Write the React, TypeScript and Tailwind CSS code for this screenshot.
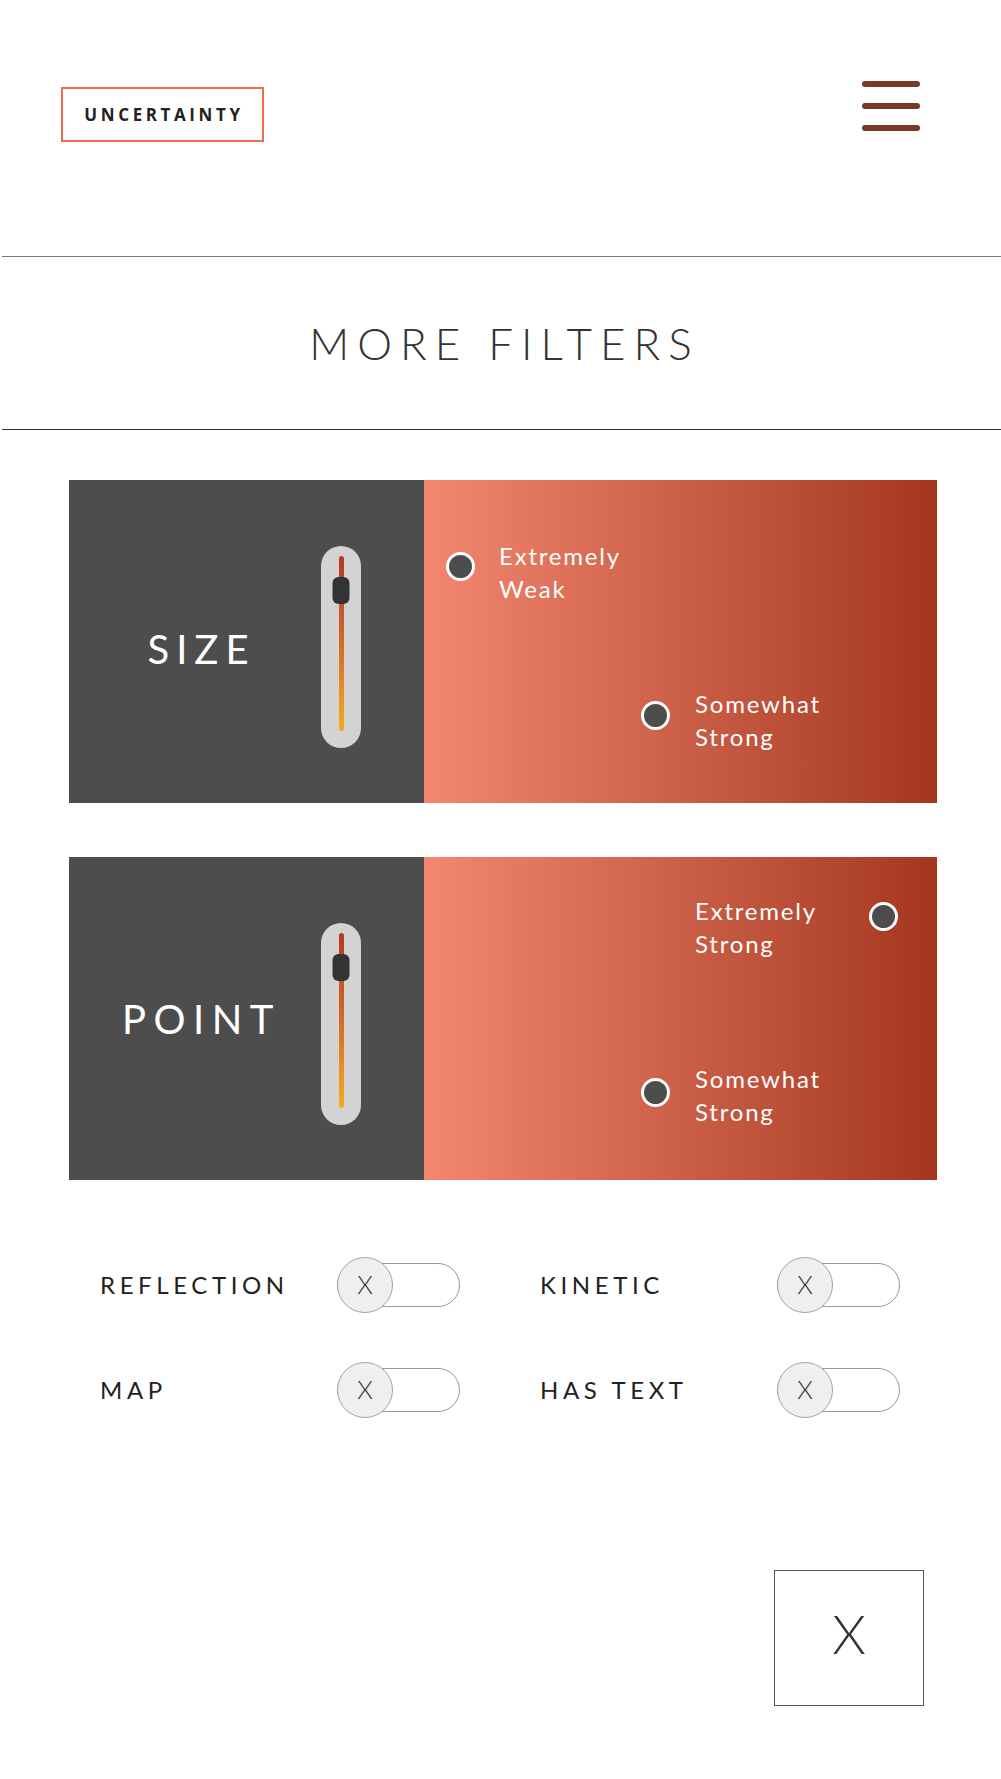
import React from "react";

const Slider: React.FC = () => (
  <div className="flex h-[202px] w-[40px] flex-col items-center rounded-full bg-[#d3d3d3] pt-[10px]">
    <div className="relative h-[175px] w-[5px] rounded-full bg-linear-to-b from-[#b03a26] via-[#d26a28] to-[#f8ab1b]">
      <div className="absolute left-1/2 top-[21px] h-[27px] w-[17px] -translate-x-1/2 rounded-[6px] bg-[#333333]" />
    </div>
  </div>
);

const Dot: React.FC<{ className: string }> = ({ className }) => (
  <div className={`absolute h-[29px] w-[29px] rounded-full border-[3.5px] border-white bg-[#4d4d4d] ${className}`} />
);

const Label: React.FC<{ className: string; lines: string[] }> = ({ className, lines }) => (
  <div className={`absolute text-[24px] leading-[33px] tracking-[1.8px] text-white ${className}`}>
    {lines.map((l) => (
      <div key={l}>{l}</div>
    ))}
  </div>
);

const Toggle: React.FC = () => (
  <div className="relative h-[56px] w-[123px]">
    <div className="absolute left-0 top-[6px] h-[44px] w-[123px] rounded-full border border-[#9a9a9a] bg-white" />
    <div className="absolute left-0 top-0 flex h-[56px] w-[56px] items-center justify-center rounded-full border border-[#a3a3a3] bg-[#efefef] text-[25px] font-light text-[#333333]">
      X
    </div>
  </div>
);

const ToggleRow: React.FC<{ label: string }> = ({ label }) => (
  <div className="flex items-center">
    <div className="w-[237px] text-[24px] tracking-[4.6px] text-[#222222]">{label}</div>
    <Toggle />
  </div>
);

export default function App() {
  return (
    <div className="min-h-[1779px] w-full bg-white font-[family-name:Lato,sans-serif]">
      {/* header */}
      <div className="flex h-[256px] items-start justify-between pl-[61px] pr-[81px]">
        <div className="mt-[87px] flex h-[55px] w-[203px] items-center justify-center border-2 border-[#f26b4d] pl-[3px] font-[family-name:'Open_Sans',sans-serif] text-[17px] font-bold tracking-[3.6px] text-[#222222]">
          UNCERTAINTY
        </div>
        <div className="mt-[81px] flex flex-col gap-[16px]">
          <div className="h-[6px] w-[58px] rounded-full bg-[#7b3829]" />
          <div className="h-[6px] w-[58px] rounded-full bg-[#7b3829]" />
          <div className="h-[6px] w-[58px] rounded-full bg-[#7b3829]" />
        </div>
      </div>
      <div className="ml-[2px] h-px bg-[#777777]" />

      <div className="flex h-[172px] items-center justify-center">
        <h1 className="pl-[8px] text-[44px] font-light tracking-[8px] text-[#333333]">MORE FILTERS</h1>
      </div>
      <div className="ml-[2px] h-px bg-[#333333]" />

      {/* cards */}
      <div className="flex flex-col gap-[54px] pl-[69px] pt-[50px]">
        <div className="flex h-[323px] w-[868px]">
          <div className="flex w-[355px] items-center bg-[#4d4d4d] pl-[9px]">
            <div className="mt-[14px] w-[240px] pl-[7px] text-center text-[40px] tracking-[7px] text-white">SIZE</div>
            <div className="ml-[3px] mt-[10px]">
              <Slider />
            </div>
          </div>
          <div className="relative flex-1 bg-linear-to-r from-[#f3876f] to-[#a4361f]">
            <Dot className="left-[22px] top-[72px]" />
            <Label className="left-[75px] top-[59px]" lines={["Extremely", "Weak"]} />
            <Dot className="left-[217px] top-[221px]" />
            <Label className="left-[271px] top-[207px]" lines={["Somewhat", "Strong"]} />
          </div>
        </div>

        <div className="flex h-[323px] w-[868px]">
          <div className="flex w-[355px] items-center bg-[#4d4d4d] pl-[9px]">
            <div className="w-[240px] pl-[7px] text-center text-[40px] tracking-[7.5px] text-white">POINT</div>
            <div className="ml-[3px] mt-[10px]">
              <Slider />
            </div>
          </div>
          <div className="relative flex-1 bg-linear-to-r from-[#f3876f] to-[#a4361f]">
            <Label className="left-[271px] top-[37px]" lines={["Extremely", "Strong"]} />
            <Dot className="left-[445px] top-[45px]" />
            <Dot className="left-[217px] top-[221px]" />
            <Label className="left-[271px] top-[205px]" lines={["Somewhat", "Strong"]} />
          </div>
        </div>
      </div>

      {/* toggles */}
      <div className="grid grid-cols-[440px_440px] gap-y-[49px] pl-[100px] pt-[77px]">
        <ToggleRow label="REFLECTION" />
        <ToggleRow label="KINETIC" />
        <ToggleRow label="MAP" />
        <ToggleRow label="HAS TEXT" />
      </div>

      <div className="flex justify-end pb-[73px] pr-[77px] pt-[152px]">
        <button className="flex h-[136px] w-[150px] items-center justify-center border-[1.5px] border-[#555555] pb-[10px] text-[54px] font-light text-[#333333]">
          X
        </button>
      </div>
    </div>
  );
}
